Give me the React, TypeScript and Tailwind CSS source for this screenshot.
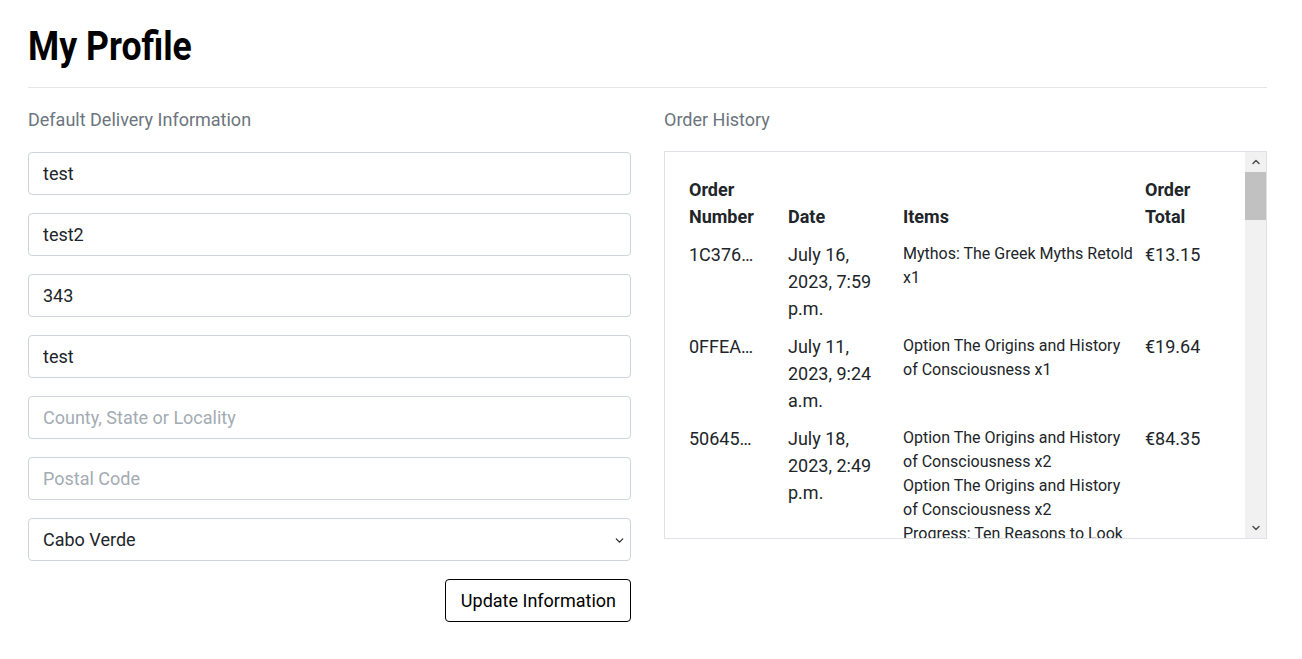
import { ChevronDown, ChevronUp } from 'lucide-react';

const fields = [
  { value: 'test', placeholder: 'Full Name' },
  { value: 'test2', placeholder: 'Phone Number' },
  { value: '343', placeholder: 'Street Address 1' },
  { value: 'test', placeholder: 'Town or City' },
  { value: '', placeholder: 'County, State or Locality' },
  { value: '', placeholder: 'Postal Code' },
];

const orders = [
  {
    number: '1C376…',
    date: 'July 16, 2023, 7:59 p.m.',
    items: ['Mythos: The Greek Myths Retold x1'],
    total: '€13.15',
  },
  {
    number: '0FFEA…',
    date: 'July 11, 2023, 9:24 a.m.',
    items: ['Option The Origins and History of Consciousness x1'],
    total: '€19.64',
  },
  {
    number: '50645…',
    date: 'July 18, 2023, 2:49 p.m.',
    items: [
      'Option The Origins and History of Consciousness x2',
      'Option The Origins and History of Consciousness x2',
      'Progress: Ten Reasons to Look Forward to the Future x1',
    ],
    total: '€84.35',
  },
  {
    number: 'A91D2…',
    date: 'July 20, 2023, 11:02 a.m.',
    items: ['Sapiens: A Brief History of Humankind x1'],
    total: '€22.40',
  },
];

function Scrollbar() {
  return (
    <div className="flex w-[21px] shrink-0 flex-col bg-[#f1f1f1]">
      <div className="flex h-[20px] items-center justify-center">
        <ChevronUp size={12} strokeWidth={3} className="text-[#505050]" />
      </div>
      <div className="h-[48px] bg-[#c1c1c1]" />
      <div className="flex-1" />
      <div className="flex h-[20px] items-center justify-center">
        <ChevronDown size={12} strokeWidth={3} className="text-[#505050]" />
      </div>
    </div>
  );
}

export default function App() {
  return (
    <div className="bg-white text-[#212529] font-['Roboto',sans-serif] min-h-[659px] pl-[28px] pr-[35px]">
      <h1 className="pt-[23px] text-[40px] leading-[48px] font-bold text-black">
        <span className="inline-block origin-left scale-x-[0.89]">My Profile</span>
      </h1>
      <hr className="mt-[16px] border-0 border-t border-[#e5e5e5]" />

      <div className="flex gap-[33px] pt-[18px]">
        {/* delivery form */}
        <div className="w-[603px] shrink-0">
          <p className="text-[18px] leading-[27px] text-[#6c757d] mb-[19px]">Default Delivery Information</p>
          <div className="flex flex-col gap-[18px]">
            {fields.map((f, i) => (
              <input
                key={i}
                defaultValue={f.value}
                placeholder={f.placeholder}
                className="h-[43px] w-full rounded-[4px] border border-[#ced4da] px-[14px] text-[18px] text-[#212529] placeholder:text-[#a3abb3] outline-none"
              />
            ))}
            <div className="relative">
              <select
                defaultValue="CV"
                className="h-[43px] w-full appearance-none rounded-[4px] border border-[#ced4da] bg-white px-[14px] text-[18px] text-[#212529] outline-none"
              >
                <option value="CV">Cabo Verde</option>
              </select>
              <ChevronDown
                size={13}
                strokeWidth={2.2}
                className="pointer-events-none absolute right-[5px] top-[16px] text-[#222]"
              />
            </div>
            <div className="flex justify-end">
              <button className="h-[43px] rounded-[4px] border border-black bg-white pl-[15px] pr-[14px] text-[18px] text-black">
                Update Information
              </button>
            </div>
          </div>
        </div>

        {/* order history */}
        <div className="w-[603px] shrink-0">
          <p className="text-[18px] leading-[27px] text-[#6c757d] mb-[18px]">Order History</p>
          <div className="flex h-[388px] border border-[#dee2e6]">
            <div className="flex-1 overflow-hidden pl-[24px] pt-[19px]">
              <div className="grid grid-cols-[99px_115px_242px_1fr]">
                {['Order Number', 'Date', 'Items', 'Order Total'].map((h) => (
                  <div key={h} className="flex items-end pt-[5px] pb-[6px] pr-[12px] text-[18px] leading-[27px] font-bold">
                    {h}
                  </div>
                ))}
                {orders.map((o) => (
                  <div key={o.number} className="contents">
                    <div className="pt-[5px] pb-[6px] pr-[12px] text-[18px] leading-[27px]">{o.number}</div>
                    <div className="pt-[5px] pb-[6px] pr-[12px] text-[18px] leading-[27px]">{o.date}</div>
                    <div className="pt-[6px] pb-[5px] pr-[8px] text-[16px] leading-[24px]">
                      {o.items.map((it, i) => (
                        <div key={i}>{it}</div>
                      ))}
                    </div>
                    <div className="pt-[5px] pb-[6px] pr-[12px] text-[18px] leading-[27px]">{o.total}</div>
                  </div>
                ))}
              </div>
            </div>
            <Scrollbar />
          </div>
        </div>
      </div>
    </div>
  );
}
